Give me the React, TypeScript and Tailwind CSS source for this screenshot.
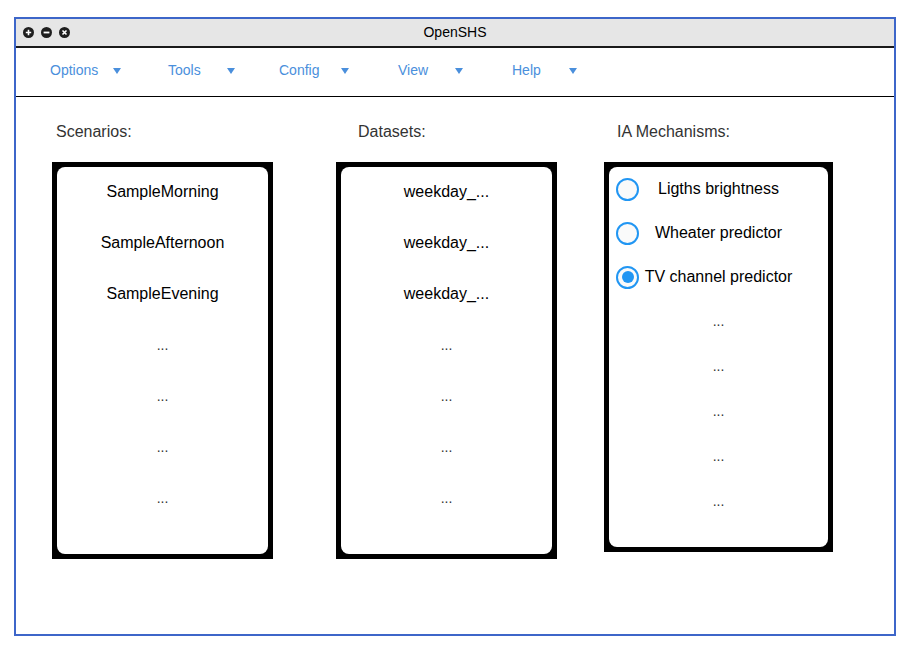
import React from "react";

const font = { fontFamily: '"Liberation Sans", Arial, sans-serif' };

function CircleIcon({ kind }: { kind: "plus" | "minus" | "x" }) {
  return (
    <svg width="11" height="11" viewBox="0 0 11 11">
      <circle cx="5.5" cy="5.5" r="5.5" fill="#1e1e1e" />
      {kind === "plus" && (
        <path d="M5.5 2.8v5.4M2.8 5.5h5.4" stroke="#fff" strokeWidth="1.6" />
      )}
      {kind === "minus" && <path d="M2.6 5.5h5.8" stroke="#fff" strokeWidth="1.8" />}
      {kind === "x" && (
        <path d="M3.5 3.5l4 4M7.5 3.5l-4 4" stroke="#fff" strokeWidth="1.6" />
      )}
    </svg>
  );
}

function Arrow() {
  return (
    <svg width="8" height="6" viewBox="0 0 8 6" className="mt-[2px]">
      <path d="M0 0h8L4 6z" fill="#4a8fdc" />
    </svg>
  );
}

const menu = [
  { label: "Options", w: "w-[118px]", tw: "w-[63px]" },
  { label: "Tools", w: "w-[111px]", tw: "w-[59px]" },
  { label: "Config", w: "w-[119px]", tw: "w-[62px]" },
  { label: "View", w: "w-[114px]", tw: "w-[57px]" },
  { label: "Help", w: "w-[80px]", tw: "w-[57px]" },
];

function ListPanel({ items }: { items: string[] }) {
  return (
    <div className="bg-black p-[5px] h-[397px] w-[221px]">
      <div className="bg-white rounded-[8px] h-full flex flex-col items-center pt-[14px] gap-[29px]">
        {items.map((t, i) =>
          t === "..." ? (
            <div key={i} className="h-[22px] leading-[22px] text-[14px] text-[#333]">
              ...
            </div>
          ) : (
            <div key={i} className="h-[22px] leading-[22px] text-[16px] text-black">
              {t}
            </div>
          )
        )}
      </div>
    </div>
  );
}

function Radio({ checked }: { checked?: boolean }) {
  return (
    <div className="w-[23px] h-[23px] rounded-full border-2 border-[#2196f3] bg-[#fafafa] flex items-center justify-center shrink-0">
      {checked && <div className="w-[12px] h-[12px] rounded-full bg-[#2196f3]" />}
    </div>
  );
}

export default function App() {
  const dots = ["...", "...", "...", "..."];
  return (
    <div className="w-[910px] h-[653px] bg-white pt-[17px] pl-[14px]" style={font}>
      <div className="w-[882px] h-[619px] border-2 border-[#3d66c9] bg-white flex flex-col">
        <div className="h-[27px] bg-[#e6e6e6] relative flex items-center shrink-0">
          <div className="flex items-center gap-[7px] pl-[7px]">
            <CircleIcon kind="plus" />
            <CircleIcon kind="minus" />
            <CircleIcon kind="x" />
          </div>
          <div className="absolute inset-0 flex items-center justify-center text-[14px] text-black">
            OpenSHS
          </div>
        </div>
        <div className="h-[2px] bg-[#1a1a1a] shrink-0" />
        <div className="h-[48px] flex items-center pl-[34px] pb-[4px] shrink-0">
          {menu.map((m) => (
            <div key={m.label} className={`${m.w} flex items-center`}>
              <span className={`${m.tw} text-[14px] text-[#4a8fdc]`}>{m.label}</span>
              <Arrow />
            </div>
          ))}
        </div>
        <div className="h-[1px] bg-black shrink-0" />
        <div className="flex pl-[36px] pt-[25px]">
          <div className="flex flex-col w-[221px]">
            <div className="h-[20px] leading-[20px] text-[16px] text-[#333] pl-[4px]">Scenarios:</div>
            <div className="mt-[20px]">
              <ListPanel items={["SampleMorning", "SampleAfternoon", "SampleEvening", ...dots]} />
            </div>
          </div>
          <div className="flex flex-col w-[221px] ml-[63px]">
            <div className="h-[20px] leading-[20px] text-[16px] text-[#333] pl-[22px]">Datasets:</div>
            <div className="mt-[20px]">
              <ListPanel items={["weekday_...", "weekday_...", "weekday_...", ...dots]} />
            </div>
          </div>
          <div className="flex flex-col w-[229px] ml-[47px]">
            <div className="h-[20px] leading-[20px] text-[16px] text-[#333] pl-[13px]">IA Mechanisms:</div>
            <div className="mt-[20px] bg-black p-[5px] h-[390px] w-[229px]">
              <div className="bg-white rounded-[8px] h-full flex flex-col">
                {[
                  { t: "Ligths brightness", c: false },
                  { t: "Wheater predictor", c: false },
                  { t: "TV channel predictor", c: true },
                ].map((r) => (
                  <div key={r.t} className="h-[44px] flex items-center px-[7px]">
                    <Radio checked={r.c} />
                    <div className="flex-1 text-center text-[16px] text-black whitespace-nowrap">{r.t}</div>
                    <div className="w-[23px] shrink-0" />
                  </div>
                ))}
                {["...", "...", "...", "...", "..."].map((d, i) => (
                  <div key={i} className="h-[45px] flex items-center justify-center text-[14px] text-[#333]">
                    {d}
                  </div>
                ))}
              </div>
            </div>
          </div>
        </div>
      </div>
    </div>
  );
}
